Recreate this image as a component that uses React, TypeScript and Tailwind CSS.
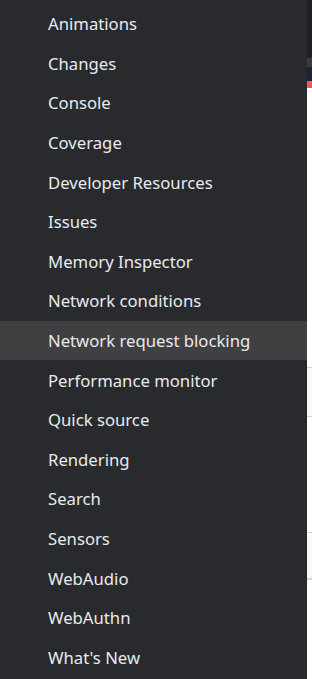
const items = [
  "Animations",
  "Changes",
  "Console",
  "Coverage",
  "Developer Resources",
  "Issues",
  "Memory Inspector",
  "Network conditions",
  "Network request blocking",
  "Performance monitor",
  "Quick source",
  "Rendering",
  "Search",
  "Sensors",
  "WebAudio",
  "WebAuthn",
  "What's New",
];

const active = "Network request blocking";

export default function App() {
  return (
    <div className="flex h-[679px] w-[312px] overflow-hidden bg-white">
      {/* Menu */}
      <div
        className="flex h-full w-[307px] shrink-0 flex-col bg-[#292a2d] pt-1"
        style={{ fontFamily: '"Noto Sans", "Open Sans", sans-serif' }}
      >
        {items.map((item) => (
          <div
            key={item}
            className={`flex h-[39.6px] items-center pl-12 text-[16.7px] text-[#e8eaed] ${
              item === active ? "bg-[#3f4042]" : ""
            }`}
          >
            {item}
          </div>
        ))}
      </div>

      {/* Page peeking out behind */}
      <div className="flex flex-1 flex-col">
        <div className="h-[58px] bg-[#202124]" />
        <div className="h-[9px] bg-[#3c3c3c]" />
        <div className="h-[14px] bg-[#1f2335]" />
        <div className="h-[7px] bg-[#f25a5a]" />
        <div className="h-[279px] bg-white" />
        <div className="h-[49px] border-t border-[#d5d5d5] bg-[#f8f9fa]" />
        <div className="h-[116px] border-t border-[#d5d5d5] bg-white" />
        <div className="h-[47px] border-y border-[#d5d5d5] bg-[#f8f9fa]" />
        <div className="flex-1 border-t border-[#d5d5d5] bg-white" />
      </div>
    </div>
  );
}
